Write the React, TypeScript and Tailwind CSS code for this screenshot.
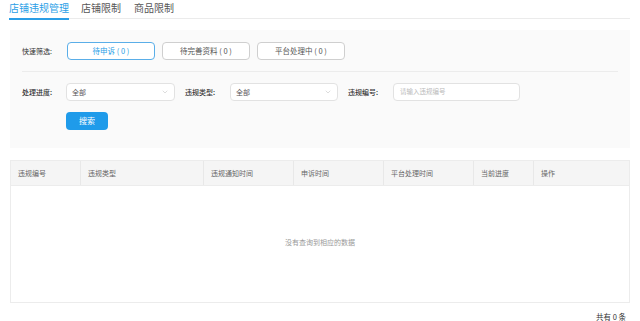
import { ChevronDown } from 'lucide-react'

const QUICK = [
  { label: '待申诉 ( 0 )', on: true },
  { label: '待完善资料 ( 0 )', on: false },
  { label: '平台处理中 ( 0 )', on: false },
]

const COLS = [
  { name: '违规编号', w: 'w-[70px]' },
  { name: '违规类型', w: 'w-[123px]' },
  { name: '违规通知时间', w: 'w-[90px]' },
  { name: '申诉时间', w: 'w-[90px]' },
  { name: '平台处理时间', w: 'w-[90px]' },
  { name: '当前进度', w: 'w-[60px]' },
  { name: '操作', w: 'flex-1' },
]

function Select({ w }: { w: string }) {
  return (
    <div className={`flex h-[18px] ${w} items-center justify-between rounded-sm border border-[#e2e2e2] bg-white pl-[5px] pr-[5px] text-[7px] text-[#555]`}>
      <span>全部</span>
      <ChevronDown size={8} className="text-[#bbb]" strokeWidth={1.5} />
    </div>
  )
}

export default function App() {
  return (
    <div
      className="h-[321px] w-[640px] overflow-hidden bg-white px-[10px] text-[#333]"
      style={{ fontFamily: '"Noto Sans CJK SC", "Noto Sans", sans-serif' }}
    >
      {/* tabs */}
      <div className="flex h-[19px] items-start border-b border-[#ebebeb] text-[10px] leading-[12px]">
        <div className="relative -ml-px mt-[2px] h-[17px]">
          <span className="text-[#2a9ee6]">店铺违规管理</span>
          <span className="absolute -bottom-px left-0 h-[2px] w-[60px] bg-[#2a9ee6]" />
        </div>
        <span className="ml-[12px] mt-[2px] text-[#555]">店铺限制</span>
        <span className="ml-[13px] mt-[2px] text-[#555]">商品限制</span>
      </div>

      {/* filter panel */}
      <div className="mt-[11px] h-[118px] bg-[#fafafa] px-[12px] pt-[12px]">
        <div className="flex h-[18px] items-center text-[7px]">
          <span className="w-[45px] text-[#333]">快速筛选:</span>
          <div className="flex gap-[7px] text-[7.5px]">
            {QUICK.map((q) => (
              <div
                key={q.label}
                className={`flex h-[18px] w-[88px] items-center justify-center rounded-sm border bg-white ${
                  q.on ? 'border-[#5aaee8] text-[#2a9ee6]' : 'border-[#cfcfcf] text-[#555]'
                }`}
              >
                {q.label}
              </div>
            ))}
          </div>
        </div>

        <div className="mt-[11px] h-px bg-[#ececec]" />

        <div className="mt-[11px] flex h-[18px] items-center text-[7px]">
          <span className="w-[44px] font-medium text-[#333]">处理进度:</span>
          <Select w="w-[109px]" />
          <span className="ml-[10px] w-[45px] font-medium text-[#333]">违规类型:</span>
          <Select w="w-[108px]" />
          <span className="ml-[10px] w-[45px] font-medium text-[#333]">违规编号:</span>
          <div className="flex h-[18px] w-[127px] items-center rounded-sm border border-[#e2e2e2] bg-white pl-[6px] text-[6.5px] text-[#bbb]">
            请输入违规编号
          </div>
        </div>

        <div className="mt-[11px] pl-[44px]">
          <div className="flex h-[18px] w-[42px] items-center justify-center rounded-sm bg-[#1f9bea] text-[8px] text-white">
            搜索
          </div>
        </div>
      </div>

      {/* table */}
      <div className="mt-[12px] flex h-[143px] flex-col border border-[#ececec]">
        <div className="flex h-[24px] bg-[#f5f5f5] text-[7px] text-[#666]">
          {COLS.map((c, i) => (
            <div
              key={c.name}
              className={`${c.w} flex items-center pl-[7px] ${i < COLS.length - 1 ? 'border-r border-[#e8e8e8]' : ''}`}
            >
              {c.name}
            </div>
          ))}
        </div>
        <div className="flex flex-1 items-center justify-center border-t border-[#ececec] pb-[3px] text-[7px] text-[#999]">
          没有查询到相应的数据
        </div>
      </div>

      <div className="mt-[9px] flex justify-end pr-[4px] text-[7.5px] leading-[9px] text-[#333]">共有&nbsp;0&nbsp;条</div>
    </div>
  )
}
